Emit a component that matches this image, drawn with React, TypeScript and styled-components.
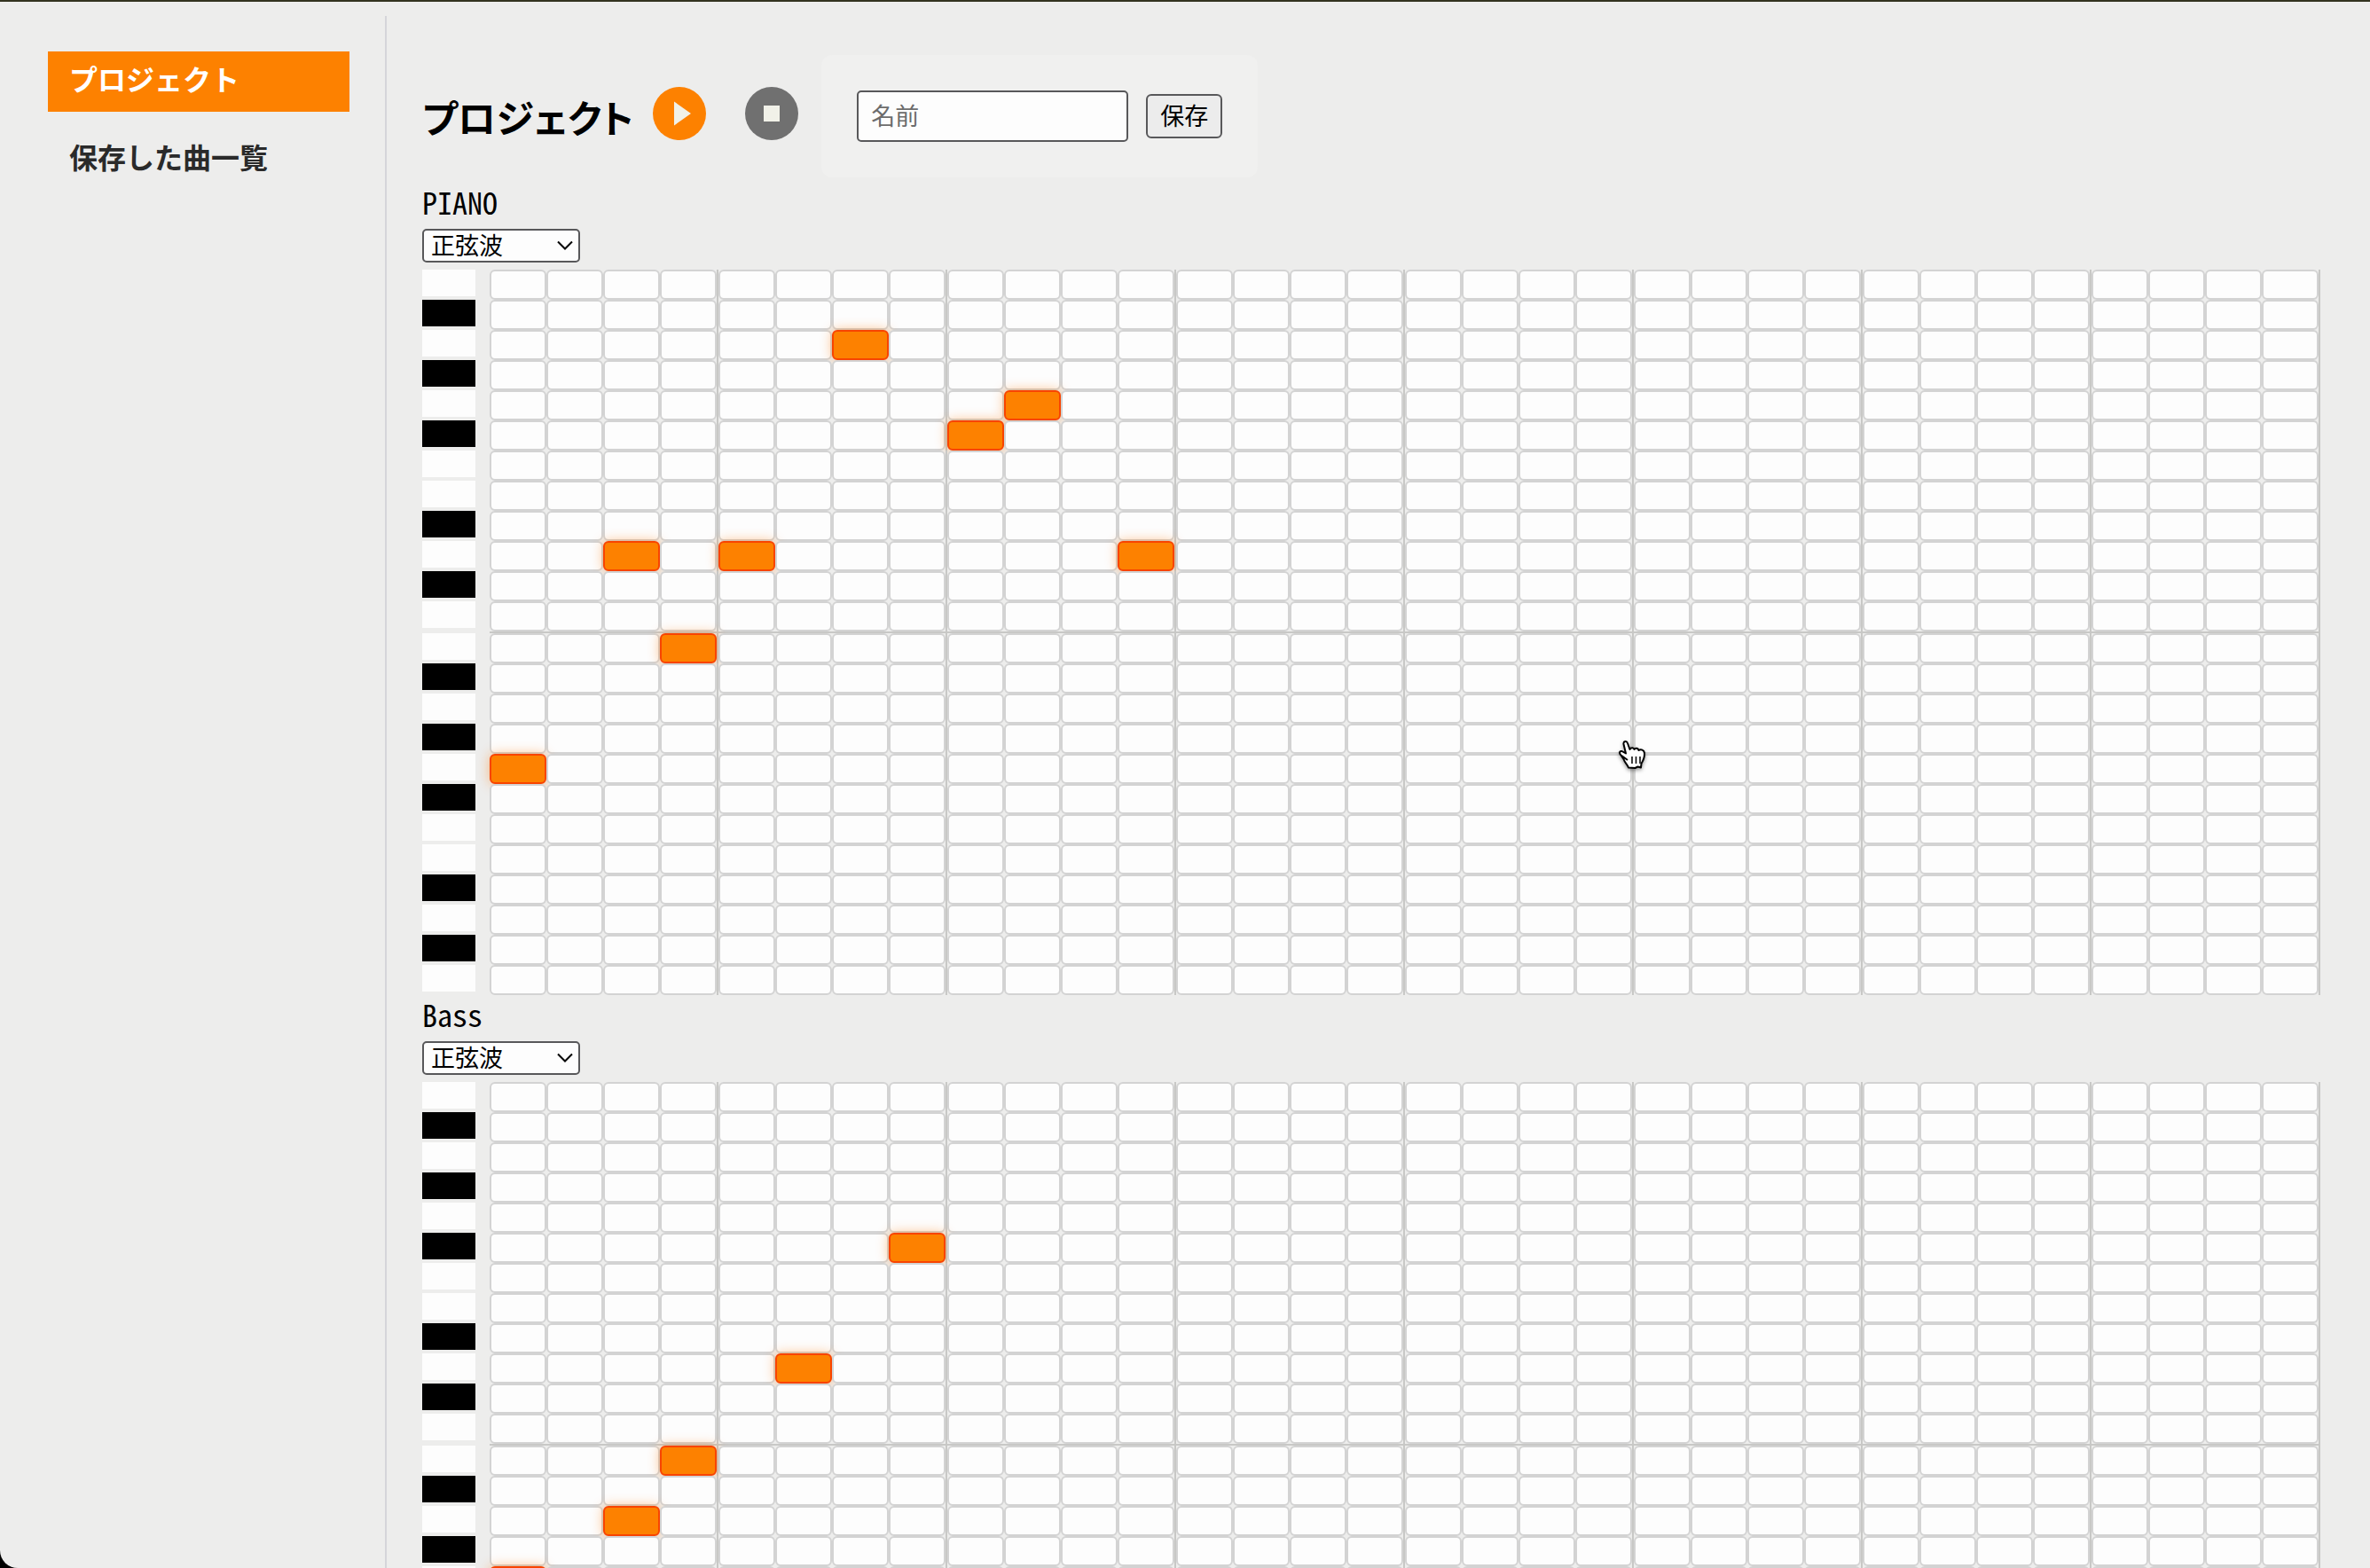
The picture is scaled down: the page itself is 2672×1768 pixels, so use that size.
import React, { useState } from "react";
import styled, { createGlobalStyle } from "styled-components";

const color = {
  page: "#ededec",
  card: "#f0f0ef",
  paper: "#fdfdfd",
  accent: "#fd8100",
  accentEdge: "#f84400",
  line: "#d3d3d3",
  divider: "#c8c8c6",
  control: "#58585a",
};

const GlobalStyle = createGlobalStyle`
  *, *::before, *::after { box-sizing: border-box; }
  body {
    margin: 0;
    background: #000;
    color: #000;
    font-family: "Noto Sans CJK JP", sans-serif;
  }
  button, input, select { font: inherit; color: inherit; margin: 0; }
`;

const Window = styled.div`
  display: flex;
  height: 100vh;
  overflow: hidden;
  background: ${color.page};
  border-top: 2px solid #33331f;
  border-bottom-left-radius: 20px;
`;

const Sidebar = styled.nav`
  flex: none;
  width: 436px;
  margin-top: 16px;
  padding: 40px 40px 0 54px;
  border-right: 2px solid #d5d5da;
`;

const NavList = styled.ul`
  display: flex;
  flex-direction: column;
  gap: 20px;
  margin: 0;
  padding: 0;
  list-style: none;
`;

const NavLink = styled.a<{ $active?: boolean }>`
  display: block;
  padding: 6px 24px 14px;
  font-size: 32px;
  font-weight: 700;
  line-height: 48px;
  text-decoration: none;
  color: ${(p) => (p.$active ? "#fff" : "#2a2a2a")};
  background: ${(p) => (p.$active ? color.accent : "transparent")};
`;

const Main = styled.main`
  flex: 1;
  min-width: 0;
  padding: 60px 56px 40px 40px;
  overflow-y: auto;
  scrollbar-width: none;
`;

const Toolbar = styled.header`
  display: flex;
  align-items: center;
  margin-bottom: 6px;
`;

const Title = styled.h1`
  margin: 0 22px 0 0;
  font-size: 43px;
  font-weight: 700;
  line-height: 72px;
  font-feature-settings: "palt";
  white-space: nowrap;
`;

const Transport = styled.div`
  display: flex;
  gap: 44px;
  margin-right: 26px;
  padding-bottom: 6px;
`;

const RoundButton = styled.button<{ $tone: string }>`
  display: flex;
  align-items: center;
  justify-content: center;
  width: 60px;
  height: 60px;
  padding: 0;
  border: 0;
  border-radius: 50%;
  background: ${(p) => p.$tone};
`;

const SaveForm = styled.form`
  display: flex;
  align-items: center;
  gap: 20px;
  padding: 40px;
  background: ${color.card};
  border-radius: 12px;
`;

const NameInput = styled.input`
  width: 306px;
  height: 58px;
  padding: 0 14px 4px;
  border: 2px solid ${color.control};
  border-radius: 5px;
  background: ${color.paper};
  font-size: 27px;
  &::placeholder {
    color: #6c6c6c;
    opacity: 1;
  }
`;

const SaveButton = styled.button`
  height: 50px;
  padding: 0 14px 2px;
  border: 2px solid ${color.control};
  border-radius: 6px;
  background: #ececec;
  font-size: 27px;
  line-height: 40px;
`;

const Track = styled.section`
  display: flex;
  flex-direction: column;
  align-items: flex-start;
`;

const TrackName = styled.h2`
  margin: 0;
  padding: 4px 0 12px;
  font-family: "Noto Sans Mono CJK JP", "DejaVu Sans Mono", monospace;
  font-size: 34px;
  font-weight: 400;
  line-height: 36px;
`;

const SelectBox = styled.div`
  position: relative;
  margin-bottom: 8px;
`;

const WaveSelect = styled.select`
  display: block;
  width: 178px;
  height: 38px;
  padding: 0 36px 2px 8px;
  appearance: none;
  border: 2px solid ${color.control};
  border-radius: 5px;
  background: ${color.paper};
  font-size: 27px;
  line-height: 32px;
`;

const Chevron = styled.svg`
  position: absolute;
  right: 8px;
  top: 13px;
  pointer-events: none;
`;

const Roll = styled.div`
  align-self: stretch;
`;

const RollRow = styled.div`
  display: flex;
  align-items: flex-end;
  gap: 16px;
`;

const Key = styled.div<{ $black: boolean }>`
  flex: none;
  width: 60px;
  height: 30px;
  margin-bottom: 4px;
  background: ${(p) => (p.$black ? "#000" : color.paper)};
`;

const Steps = styled.div<{ $octave: boolean }>`
  display: flex;
  flex: 1;
  min-width: 0;
  border-top: ${(p) => (p.$octave ? `2px solid ${color.divider}` : "0")};
`;

const Beat = styled.div`
  display: flex;
  flex: 1;
  min-width: 0;
  border-right: 2px solid ${color.divider};
`;

const Step = styled.button<{ $on: boolean }>`
  flex: 1;
  min-width: 0;
  height: 34px;
  padding: 0;
  border: 2px solid ${(p) => (p.$on ? color.accentEdge : color.line)};
  border-radius: 6px;
  background: ${(p) => (p.$on ? color.accent : color.paper)};
  box-shadow: ${(p) => (p.$on ? "0 0 14px rgba(255, 120, 0, 0.45)" : "none")};
`;

const Pointer = styled.svg`
  position: fixed;
  left: 1824px;
  top: 834px;
  pointer-events: none;
  filter: drop-shadow(0 2px 2px rgba(0, 0, 0, 0.4));
`;

const ROWS = 24;
const BEATS = 8;
const STEPS_PER_BEAT = 4;
const BLACK_KEYS = [1, 3, 5, 8, 10];

const range = (n: number) => Array.from({ length: n }, (_, i) => i);

type Note = [row: number, step: number];

const PIANO: Note[] = [[16, 0], [9, 2], [12, 3], [9, 4], [2, 6], [5, 8], [4, 9], [9, 11]];
const BASS: Note[] = [[16, 0], [14, 2], [12, 3], [9, 5], [5, 7]];

const noteId = (row: number, step: number) => `${row}:${step}`;

function TrackEditor({ id, name, notes }: { id: string; name: string; notes: Note[] }) {
  const [active, setActive] = useState(() => new Set(notes.map(([r, s]) => noteId(r, s))));

  const toggle = (key: string) =>
    setActive((prev) => {
      const next = new Set(prev);
      if (!next.delete(key)) next.add(key);
      return next;
    });

  return (
    <Track>
      <TrackName>
        <label htmlFor={`${id}-wave`}>{name}</label>
      </TrackName>
      <SelectBox>
        <WaveSelect id={`${id}-wave`} defaultValue="sine">
          <option value="sine">正弦波</option>
        </WaveSelect>
        <Chevron width="18" height="12" viewBox="0 0 18 12" fill="none" stroke="#000" strokeWidth="2">
          <path d="M1 1.500 9 9.500 17 1.500" />
        </Chevron>
      </SelectBox>
      <Roll>
        {range(ROWS).map((row) => (
          <RollRow key={row}>
            <Key $black={BLACK_KEYS.includes(row % 12)} />
            <Steps $octave={row === 12}>
              {range(BEATS).map((beat) => (
                <Beat key={beat}>
                  {range(STEPS_PER_BEAT).map((i) => {
                    const step = beat * STEPS_PER_BEAT + i;
                    const key = noteId(row, step);
                    return (
                      <Step
                        key={step}
                        type="button"
                        $on={active.has(key)}
                        aria-pressed={active.has(key)}
                        onClick={() => toggle(key)}
                      />
                    );
                  })}
                </Beat>
              ))}
            </Steps>
          </RollRow>
        ))}
      </Roll>
    </Track>
  );
}

export default function App() {
  return (
    <>
      <GlobalStyle />
      <Window>
        <Sidebar>
          <NavList>
            <li>
              <NavLink href="#project" $active>プロジェクト</NavLink>
            </li>
            <li>
              <NavLink href="#songs">保存した曲一覧</NavLink>
            </li>
          </NavList>
        </Sidebar>
        <Main>
          <Toolbar>
            <Title>プロジェクト</Title>
            <Transport>
              <RoundButton type="button" $tone={color.accent} aria-label="再生">
                <svg width="60" height="60" viewBox="0 0 60 60">
                  <path d="M24 16.500 43 30 24 43.500z" fill="#f1f1e8" />
                </svg>
              </RoundButton>
              <RoundButton type="button" $tone="#707070" aria-label="停止">
                <svg width="60" height="60" viewBox="0 0 60 60">
                  <path d="M21 21h18v18H21z" fill="#f1f1e8" />
                </svg>
              </RoundButton>
            </Transport>
            <SaveForm onSubmit={(e) => e.preventDefault()}>
              <NameInput type="text" placeholder="名前" aria-label="名前" />
              <SaveButton type="submit">保存</SaveButton>
            </SaveForm>
          </Toolbar>
          <TrackEditor id="piano" name="PIANO" notes={PIANO} />
          <TrackEditor id="bass" name="Bass" notes={BASS} />
        </Main>
      </Window>
      <Pointer width="32" height="35" viewBox="0 0 32 35">
        <path
          d="M11 23 L3.500 17.500 C1 15 2 12.500 4.500 13 L9 15.500 L6.500 5 C6 1.500 10 .8 11 4 L13.500 11 C15 8.500 18 9 18.500 11 C20 8.800 23 9.500 23.500 12 C26 10.500 29.500 11.500 30 15 C30.500 20 28.500 23.500 26.500 27 L26 31.500 L22.500 30.500 L19.500 32 L12 31.500 C11 28 8 26.500 6.500 22 L3.500 17.500"
          fill="#fff"
          stroke="#000"
          strokeWidth="2"
          strokeLinejoin="round"
        />
        <path d="M16 19v8M20.500 19v8M25 19v8" stroke="#000" strokeWidth="1.500" />
      </Pointer>
    </>
  );
}
